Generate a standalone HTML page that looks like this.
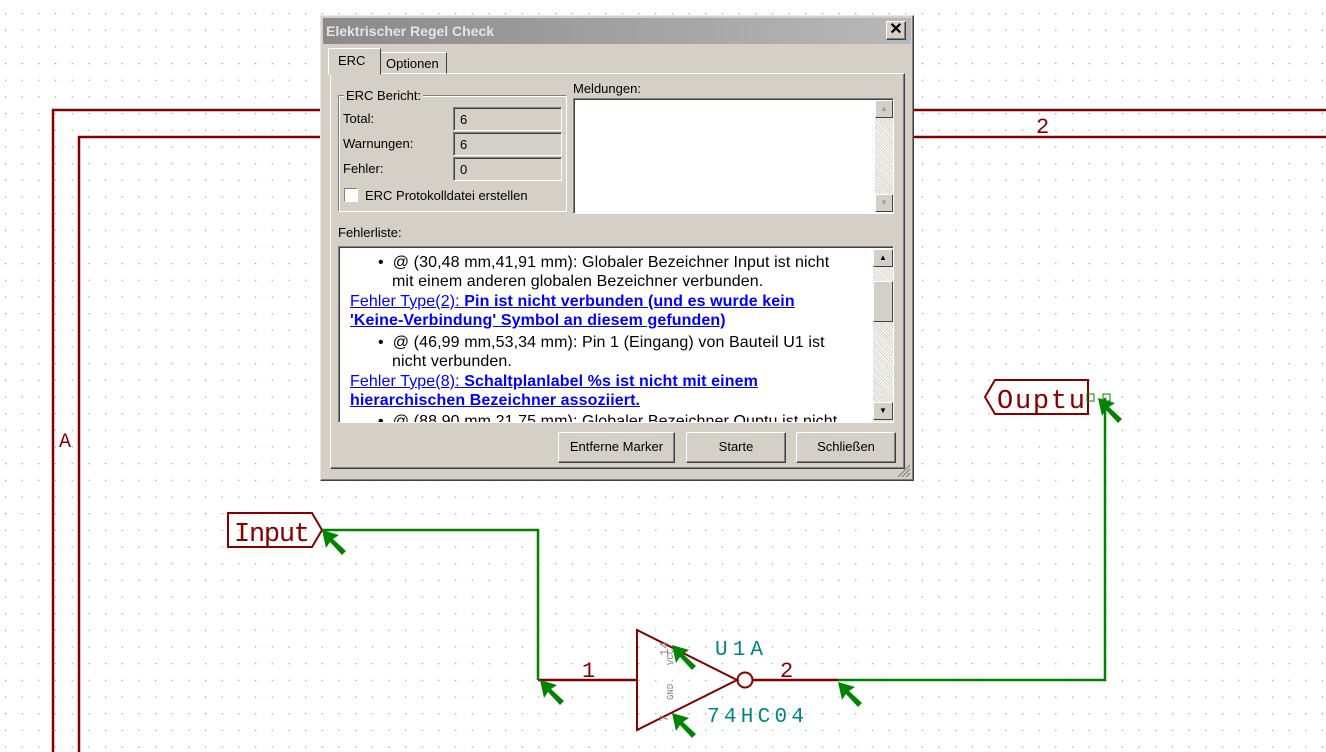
<!DOCTYPE html>
<html><head><meta charset="utf-8"><style>
*{margin:0;padding:0;box-sizing:border-box}
body{width:1326px;height:752px;overflow:hidden;background:#fff;position:relative;font-family:"Liberation Sans",sans-serif}
.abs{position:absolute}
.dlg{left:320px;top:15px;width:594px;height:466px;background:#d4d0c8;border:1px solid;border-color:#e8e6e0 #404040 #404040 #e8e6e0;box-shadow:inset -1px -1px 0 #808080}
.t{font-size:13px;color:#000}
.sunk{background:#d4d0c8;border:1px solid;border-color:#808080 #fff #fff #808080;box-shadow:inset 1px 1px 0 #404040}
.btn{background:#d4d0c8;border:1px solid;border-color:#fff #404040 #404040 #fff;box-shadow:inset -1px -1px 0 #808080;font-size:13px;text-align:center;line-height:28px}
.sb{background:#e6e4df;background-image:repeating-linear-gradient(45deg,#d4d0c8 0 1px,#fff 1px 2px)}
.arr{background:#d4d0c8;border:1px solid;border-color:#fff #404040 #404040 #fff;width:18px;height:18px;font-size:8px;text-align:center;line-height:16px;color:#000}
.lst{font-size:16px;line-height:19.3px;color:#000;letter-spacing:0.1px}
.lst .b{padding-left:42px;text-indent:-14px}
.lk{color:#00f;text-decoration:underline}
.lk b{color:#00f}
</style></head><body>
<svg class="abs" style="left:0;top:0" width="1326" height="752">
<defs>
<pattern id="g" x="5" y="13" width="16.67" height="16.67" patternUnits="userSpaceOnUse"><rect x="0" y="0" width="1.2" height="1.2" fill="#9a9a9a"/></pattern>
<g id="m"><path d="M0 0 L17 5 L11 9 L24 21 L20 25 L8 12 L4 18 Z" fill="#008400"/></g>
</defs>
<rect width="1326" height="752" fill="url(#g)"/>
<g stroke="#840000" stroke-width="2.5" fill="none">
<path d="M53 752 V110 H320 M913 110 H1326"/>
<path d="M79 752 V137 H320 M913 137 H1326"/>
<path d="M538 680 H637 M752 680 H838"/>
<path d="M637 630 V730 L737 680 Z" stroke-width="2"/>
<circle cx="745" cy="680" r="7.5" stroke-width="2"/>
<path d="M228 513 H312 L322 530 L312 547 H228 Z" stroke-width="2"/>
<path d="M995 380 H1088 V414 H995 L985 397 Z" stroke-width="2"/>
</g>
<g stroke="#008400" stroke-width="2.5" fill="none">
<path d="M322 530 H538 V680 M838 680 H1105 V398"/>
</g>
<rect x="1087" y="394" width="7" height="7" fill="none" stroke="#008400" stroke-width="1"/>
<rect x="1103" y="394" width="7" height="7" fill="none" stroke="#008400" stroke-width="1"/>
<g font-family="Liberation Mono,monospace">
<text x="59" y="447" font-size="20" fill="#840000">A</text>
<text x="1036" y="133" font-size="22" fill="#840000">2</text>
<text x="582" y="677" font-size="22" fill="#840000">1</text>
<text x="780" y="677" font-size="22" fill="#840000">2</text>
<text x="234" y="541" font-size="27" fill="#840000" textLength="76">Input</text>
<text x="997" y="408" font-size="27" fill="#840000" textLength="88">Ouptu</text>
<text x="715" y="655" font-size="21" fill="#008484" textLength="48">U1A</text>
<text x="707" y="722" font-size="21" fill="#008484" textLength="97">74HC04</text>
<text transform="translate(673,700) rotate(-90)" font-size="9" fill="#848484">GND</text>
<text transform="translate(673,665) rotate(-90)" font-size="9" fill="#848484">VCC</text>
<text transform="translate(668,656) rotate(-90)" font-size="12" fill="#848484">14</text>
<text transform="translate(668,722) rotate(-90)" font-size="12" fill="#848484">7</text>
</g>
<use href="#m" x="322" y="530"/><use href="#m" x="540" y="680"/><use href="#m" x="672" y="645"/><use href="#m" x="672" y="713"/><use href="#m" x="838" y="682"/><use href="#m" x="1098" y="398"/>
</svg>

<div class="abs dlg"></div>
<div class="abs" style="left:323px;top:18px;width:588px;height:26px;background:linear-gradient(90deg,#8a8a8a,#b8b8b8)"></div>
<div class="abs" style="left:326px;top:23px;font-size:14px;font-weight:bold;color:#e4e4e4">Elektrischer Regel Check</div>
<div class="abs btn" style="left:886px;top:21px;width:20px;height:19px;line-height:16px;font-size:16px;font-weight:bold">✕</div>
<div class="abs" style="left:330px;top:73px;width:575px;height:396px;border:1px solid;border-color:#fff #404040 #404040 #fff;box-shadow:inset -1px -1px 0 #808080"></div>
<div class="abs" style="left:380px;top:52px;width:67px;height:22px;border:1px solid;border-color:#fff #404040 transparent #fff;font-size:13px;padding:3px 0 0 5px">Optionen</div>
<div class="abs" style="left:328px;top:48px;width:53px;height:27px;background:#d4d0c8;border:1px solid;border-color:#fff #404040 transparent #fff;font-size:13px;padding:4px 0 0 9px">ERC</div>
<div class="abs" style="left:338px;top:95px;width:229px;height:117px;border:1px solid;border-color:#808080 #fff #fff #808080;box-shadow:inset 1px 1px 0 #fff,1px 1px 0 #808080 inset"></div>
<div class="abs t" style="left:344px;top:88px;background:#d4d0c8;padding:0 2px">ERC Bericht:</div>
<div class="abs t" style="left:343px;top:111px">Total:</div>
<div class="abs t" style="left:343px;top:136px">Warnungen:</div>
<div class="abs t" style="left:343px;top:161px">Fehler:</div>
<div class="abs sunk t" style="left:453px;top:107px;width:109px;height:24px;padding:4px 6px">6</div>
<div class="abs sunk t" style="left:453px;top:132px;width:109px;height:24px;padding:4px 6px">6</div>
<div class="abs sunk t" style="left:453px;top:157px;width:109px;height:24px;padding:4px 6px">0</div>
<div class="abs" style="left:344px;top:188px;width:14px;height:14px;background:#fff;border:1px solid;border-color:#808080 #fff #fff #808080"></div>
<div class="abs t" style="left:365px;top:188px">ERC Protokolldatei erstellen</div>
<div class="abs t" style="left:573px;top:81px">Meldungen:</div>
<div class="abs" style="left:573px;top:98px;width:321px;height:116px;background:#fff;border:1px solid;border-color:#808080 #fff #fff #808080;box-shadow:inset 1px 1px 0 #404040"></div>
<div class="abs sb" style="left:875px;top:100px;width:18px;height:112px"></div>
<div class="abs arr" style="left:875px;top:100px;color:#a0a0a0">▲</div>
<div class="abs arr" style="left:875px;top:194px;color:#a0a0a0">▼</div>
<div class="abs t" style="left:338px;top:225px">Fehlerliste:</div>
<div class="abs" style="left:338px;top:246px;width:556px;height:177px;background:#fff;border:1px solid;border-color:#808080 #fff #fff #808080;box-shadow:inset 1px 1px 0 #404040;overflow:hidden">
<div class="lst" style="position:absolute;left:11px;top:6px;width:500px">
<div class="b">•&nbsp; @ (30,48 mm,41,91 mm): Globaler Bezeichner Input ist nicht mit einem anderen globalen Bezeichner verbunden.</div>
<div class="lk">Fehler Type(2): <b>Pin ist nicht verbunden (und es wurde kein 'Keine-Verbindung' Symbol an diesem gefunden)</b></div>
<div class="b" style="margin-top:3px">•&nbsp; @ (46,99 mm,53,34 mm): Pin 1 (Eingang) von Bauteil U1 ist nicht verbunden.</div>
<div class="lk">Fehler Type(8): <b>Schaltplanlabel %s ist nicht mit einem hierarchischen Bezeichner assoziiert.</b></div>
<div class="b" style="margin-top:2px;white-space:nowrap">•&nbsp; @ (88,90 mm,21,75 mm): Globaler Bezeichner Ouptu ist nicht</div>
</div>
<div class="abs sb" style="left:534px;top:2px;width:20px;height:173px"></div>
<div class="abs arr" style="left:534px;top:2px;width:20px">▲</div>
<div class="abs arr" style="left:534px;top:34px;width:20px;height:41px"></div>
<div class="abs arr" style="left:534px;top:155px;width:20px">▼</div>
</div>
<div class="abs btn" style="left:558px;top:432px;width:117px;height:31px">Entferne Marker</div>
<div class="abs btn" style="left:686px;top:432px;width:100px;height:31px">Starte</div>
<div class="abs btn" style="left:796px;top:432px;width:100px;height:31px">Schließen</div>
<svg class="abs" style="left:897px;top:464px" width="14" height="14"><path d="M13 1 L1 13 M13 5 L5 13 M13 9 L9 13" stroke="#808080" stroke-width="1.2"/></svg>
</body></html>
